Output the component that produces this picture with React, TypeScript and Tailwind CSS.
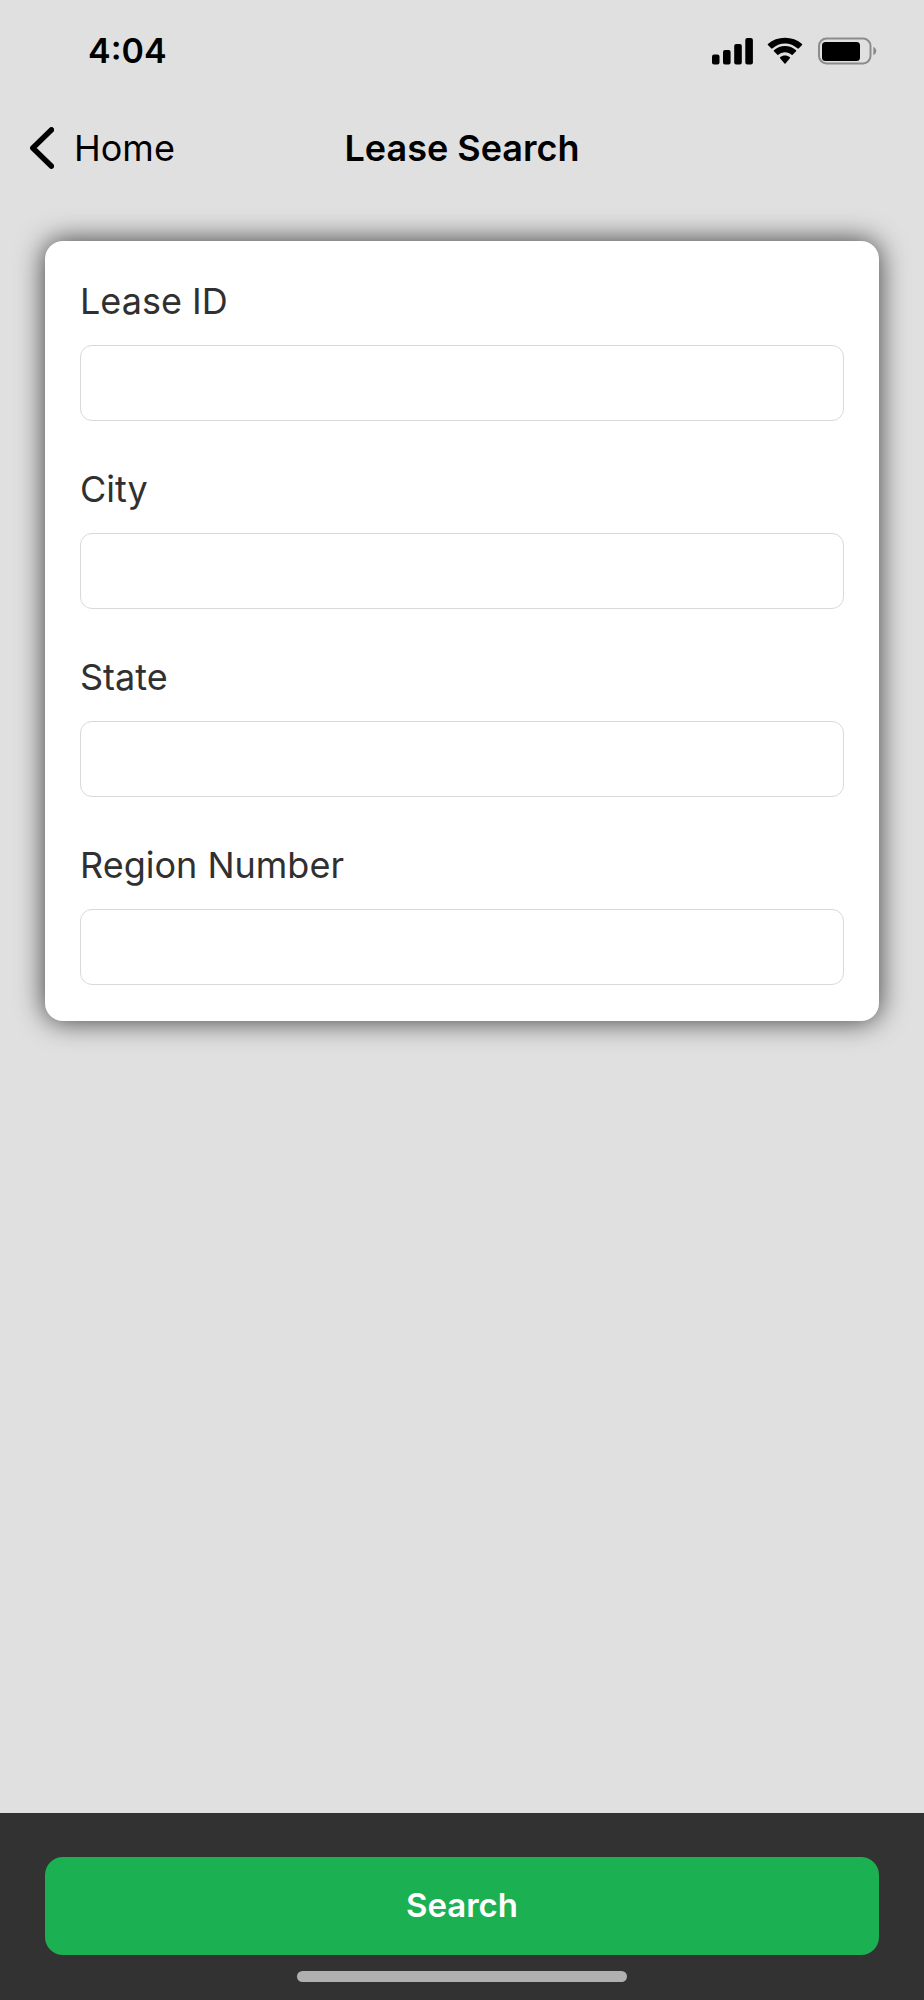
import { useState } from "react";

const FIELDS = [
  { id: "leaseId", label: "Lease ID" },
  { id: "city", label: "City" },
  { id: "state", label: "State" },
  { id: "regionNumber", label: "Region Number" },
];

function SignalIcon() {
  return (
    <svg width="41" height="28" viewBox="0 0 41 28" fill="black" aria-hidden="true">
      <rect x="0" y="17.5" width="7.5" height="10" rx="2" />
      <rect x="11" y="13" width="7.6" height="14.5" rx="2" />
      <rect x="22.2" y="7" width="7.6" height="20.5" rx="2" />
      <rect x="33.3" y="1" width="7.6" height="26.5" rx="2" />
    </svg>
  );
}

function WifiIcon() {
  return (
    <svg width="36" height="28" viewBox="0 0 36 28" fill="black" aria-hidden="true">
      <path d="M18 6.4c4.7 0 9.2 1.8 12.7 5.1.3.2.6.2.9 0l3.5-3.6c.3-.3.3-.7 0-1C30.5 2.8 24.4.7 18 .7S5.5 2.8.9 6.9c-.3.3-.3.7 0 1l3.5 3.6c.3.2.6.2.9 0C8.8 8.2 13.3 6.4 18 6.4z" />
      <path d="M18 15.3c2.5 0 4.8.9 6.6 2.5.3.3.7.3 1 0l3.5-3.6c.2-.3.2-.7 0-1C26 10.4 22.1 8.9 18 8.9s-8 1.5-11.1 4.3c-.2.3-.2.7 0 1l3.5 3.6c.3.3.7.3 1 0 1.8-1.6 4.1-2.5 6.6-2.5z" />
      <path d="M22.9 21.3c.3-.3.3-.7 0-1-2.8-2.3-7-2.3-9.8 0-.3.3-.3.7 0 1l4.4 5.3c.3.3.7.3 1 0z" />
    </svg>
  );
}

function BatteryIcon() {
  return (
    <svg width="59" height="28" viewBox="0 0 59 28" aria-hidden="true">
      <rect x="1" y="1.5" width="51.5" height="25" rx="7.5" fill="none" stroke="#8c8c8c" strokeWidth="2" />
      <rect x="4" y="5" width="38" height="19" rx="3.5" fill="black" />
      <path d="M55.3 9.7c1.7.7 3 2.4 3 4.3s-1.300 3.600-3 4.300z" fill="#8c8c8c" />
    </svg>
  );
}

function StatusBar() {
  return (
    <div className="flex h-[101px] items-center justify-between pr-[47px] pl-[88px]">
      <span className="text-[34px] font-semibold">4:04</span>
      <div className="flex items-center">
        <SignalIcon />
        <div className="mr-[15px] ml-[14px]">
          <WifiIcon />
        </div>
        <BatteryIcon />
      </div>
    </div>
  );
}

function NavBar() {
  return (
    <header className="grid h-[93px] grid-cols-[1fr_auto_1fr] items-center px-[30px] text-[36px]">
      <a href="#home" className="flex items-center gap-5">
        <svg width="24" height="42" viewBox="0 0 24 42" fill="none" aria-hidden="true">
          <path
            d="M21.5 2.8 2.8 21l18.700 18.200"
            stroke="black"
            strokeWidth="5.4"
            strokeLinecap="round"
            strokeLinejoin="round"
          />
        </svg>
        Home
      </a>
      <h1 className="font-semibold">Lease Search</h1>
    </header>
  );
}

export default function App() {
  const [values, setValues] = useState<Record<string, string>>({});

  return (
    <form
      className="flex min-h-screen flex-col bg-[#e0e0e0] font-['Inter',sans-serif] text-black"
      onSubmit={(e) => e.preventDefault()}
    >
      <StatusBar />
      <NavBar />

      <main className="flex-1 px-[45px] pt-[47px]">
        <div className="flex flex-col gap-11 rounded-[18px] bg-white px-[35px] py-9 shadow-[0_0_28px_rgba(0,0,0,0.75)]">
          {FIELDS.map(({ id, label }) => (
            <div key={id} className="flex flex-col gap-5">
              <label htmlFor={id} className="text-[36px] leading-[48px] text-[#303030]">
                {label}
              </label>
              <input
                id={id}
                type="text"
                value={values[id] ?? ""}
                onChange={(e) => setValues({ ...values, [id]: e.target.value })}
                className="h-[76px] w-full rounded-xl border border-[#d9d9d9] bg-white px-5 text-[33px] text-[#303030]"
              />
            </div>
          ))}
        </div>
      </main>

      <footer className="flex flex-col items-center bg-[#323232] px-[45px] pt-11 pb-[18px]">
        <button
          type="submit"
          className="h-[98px] w-full rounded-[18px] bg-[#1bb052] text-[33px] font-semibold text-white"
        >
          Search
        </button>
        <div className="mt-4 h-[11px] w-[330px] rounded-full bg-[#b0b0b0]" />
      </footer>
    </form>
  );
}
